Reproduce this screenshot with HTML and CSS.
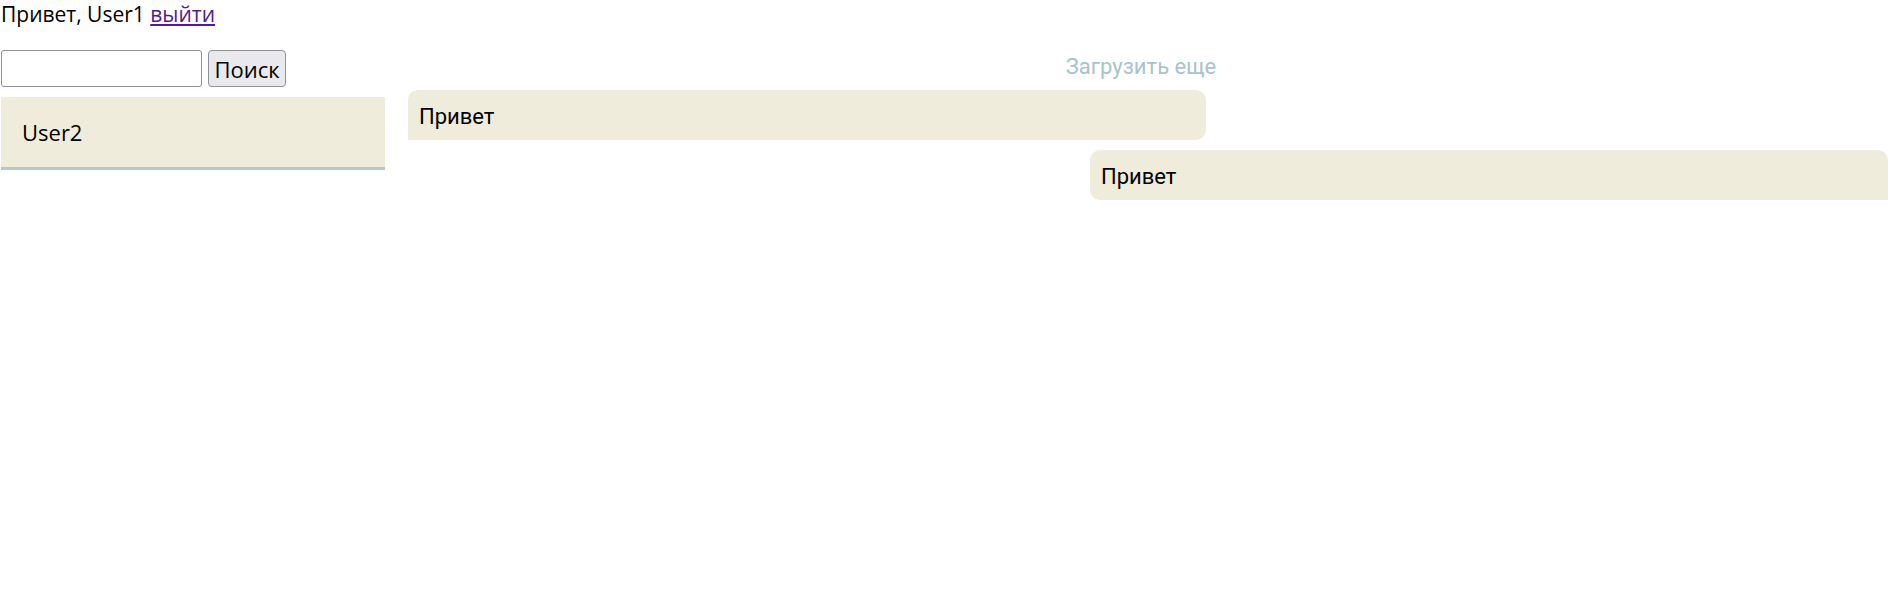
FILE: index.html
```html
<!DOCTYPE html>
<html lang="ru">
<head>
<meta charset="utf-8">
<title>Чат</title>
<link rel="stylesheet" href="styles.css">
</head>
<body>
<div class="header">Привет, User1 <a href="#" class="logout">выйти</a></div>
<div class="main">
  <aside class="sidebar">
    <form class="search">
      <input type="text" class="search-input">
      <button type="button" class="search-btn">Поиск</button>
    </form>
    <div class="user-list">
      <div class="user-item">User2</div>
    </div>
  </aside>
  <section class="chat">
    <div class="load-more">Загрузить еще</div>
    <div class="messages">
      <div class="msg msg-in">Привет</div>
      <div class="msg msg-out">Привет</div>
    </div>
  </section>
</div>
</body>
</html>
```
FILE: styles.css
```css
html, body {
  margin: 0;
  padding: 0;
  background: #ffffff;
}
body {
  font-family: "Open Sans", "Noto Sans", sans-serif;
  font-size: 21px;
  color: #000000;
}
.header {
  padding-left: 1px;
  height: 30px;
  line-height: 30px;
  margin-top: -1px;
}
.logout {
  color: #551a8b;
}
.main {
  display: flex;
  align-items: flex-start;
  margin-top: 21px;
}
.sidebar {
  width: 384px;
  padding-left: 1px;
  flex: none;
}
.search {
  display: flex;
  gap: 6px;
  height: 37px;
  margin: 0 0 10px 0;
}
.search-input {
  box-sizing: border-box;
  width: 201px;
  height: 37px;
  border: 1px solid #8f8f9d;
  border-radius: 3px;
  padding: 2px 4px;
  font: inherit;
  margin: 0;
}
.search-btn {
  box-sizing: border-box;
  width: 78px;
  height: 37px;
  border: 1px solid #8f8f9d;
  border-radius: 4px;
  background: #e9e9ed;
  font: inherit;
  font-size: 22px;
  padding: 0;
  margin: 0;
  color: #000;
}
.user-item {
  background: #f0ecdb;
  border-bottom: 3px solid #b0c8cf;
  height: 73px;
  box-sizing: border-box;
  padding: 0 21px;
  line-height: 70px;
  font-size: 22px;
}
.chat {
  flex: 1;
  margin-left: 13px;
  padding-right: 7px;
  margin-top: -5px;
}
.load-more {
  text-align: center;
  color: #a8c3cc;
  font-family: Roboto, sans-serif;
  font-size: 22px;
  height: 45px;
  line-height: 44px;
  padding-right: 4px;
}
.messages {
  display: flex;
  flex-direction: column;
  gap: 10px;
}
.msg {
  width: 798px;
  box-sizing: border-box;
  height: 50px;
  padding: 0 11px;
  line-height: 54px;
  background: #f0ecdb;
  font-family: Roboto, sans-serif;
  font-size: 22px;
}
.msg-in {
  margin-left: 10px;
  border-radius: 10px 10px 10px 0;
}
.msg-out {
  align-self: flex-end;
  border-radius: 10px 10px 0 10px;
}
```
